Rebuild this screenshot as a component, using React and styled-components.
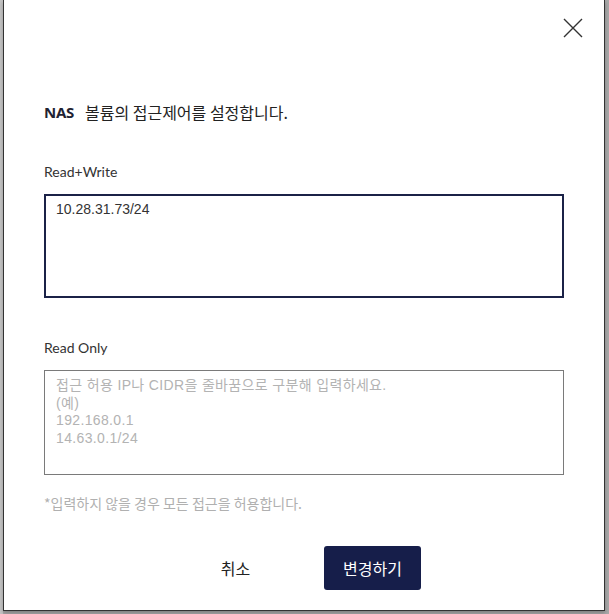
import React from 'react';
import styled, { createGlobalStyle } from 'styled-components';

const GlobalStyle = createGlobalStyle`
  html, body {
    margin: 0;
    padding: 0;
    background: #b3b3b3;
  }
  body {
    font-family: 'Noto Sans CJK KR', 'Noto Sans', sans-serif;
  }
`;

const Backdrop = styled.div`
  display: flex;
  width: 609px;
  height: 614px;
  padding-left: 3px;
  box-sizing: border-box;
  background: linear-gradient(to right, #c4c4c4 0, #c4c4c4 3px, #a8a8a8 3px);
`;

const Modal = styled.div`
  width: 602px;
  height: 611px;
  box-sizing: border-box;
  background: #fff;
  border: 1px solid #333;
  border-top: none;
  box-shadow: 0 2px 4px rgba(0, 0, 0, 0.25);
  display: flex;
  flex-direction: column;
`;

const Header = styled.div`
  display: flex;
  justify-content: flex-end;
  padding: 18px 21px 0 0;
`;

const CloseButton = styled.button`
  width: 20px;
  height: 20px;
  padding: 0;
  border: none;
  background: none;
  cursor: pointer;
  display: flex;
`;

const Body = styled.div`
  padding: 0 40px;
  display: flex;
  flex-direction: column;
`;

const Title = styled.h2`
  margin: 64px 0 0;
  height: 20px;
  display: flex;
  align-items: center;
  font-size: 16px;
  line-height: 20px;
  font-weight: 400;
  color: #222;
  font-family: 'Noto Sans CJK KR', sans-serif;
`;

const Tag = styled.strong`
  font-family: 'Noto Sans', sans-serif;
  font-size: 15px;
  line-height: 20px;
  font-weight: 700;
  color: #1f2333;
  margin-right: 11px;
  letter-spacing: -0.3px;
`;

const Label = styled.label`
  margin-top: ${p => p.$gap}px;
  font-family: Lato, sans-serif;
  font-size: 14px;
  line-height: 20px;
  color: #333;
`;

const Field = styled.textarea`
  margin-top: 12px;
  width: 520px;
  height: ${p => p.$h}px;
  box-sizing: border-box;
  resize: none;
  outline: none;
  border: ${p => (p.$active ? '2px solid #1b2247' : '1px solid #7a7a7a')};
  padding: ${p => (p.$active ? '5px 10px' : '6px 11px')};
  font-family: 'Liberation Sans', 'Noto Sans CJK KR', sans-serif;
  font-size: 14px;
  line-height: 17.5px;
  color: #333;
  caret-color: #111;

  &::placeholder {
    color: #b3b3b3;
    letter-spacing: 0.35px;
    font-family: 'Liberation Sans', 'Noto Sans CJK KR', sans-serif;
  }
`;

const Hint = styled.p`
  margin: 19px 0 0;
  font-size: 14px;
  line-height: 18px;
  color: #b0b0b0;
`;

const Actions = styled.div`
  display: flex;
  justify-content: center;
  gap: 40px;
  margin-top: 34px;
`;

const Button = styled.button`
  width: 97px;
  height: 44px;
  border: none;
  border-radius: 3px;
  font-family: 'Noto Sans CJK KR', sans-serif;
  font-size: 16px;
  cursor: pointer;
  background: ${p => (p.$primary ? '#161e4a' : 'transparent')};
  color: ${p => (p.$primary ? '#fff' : '#222')};
`;

const placeholder =
  '접근 허용 IP나 CIDR을 줄바꿈으로 구분해 입력하세요.\n(예)\n192.168.0.1\n14.63.0.1/24';

export default function App() {
  return (
    <>
      <GlobalStyle />
      <Backdrop>
        <Modal>
          <Header>
            <CloseButton aria-label="닫기">
              <svg width="20" height="20" viewBox="0 0 20 20">
                <path d="M1 1L19 19M19 1L1 19" stroke="#333" strokeWidth="1.4" fill="none" />
              </svg>
            </CloseButton>
          </Header>
          <Body>
            <Title>
              <Tag>NAS</Tag>
              <span>볼륨의 접근제어를 설정합니다.</span>
            </Title>
            <Label $gap={40}>Read+Write</Label>
            <Field $active $h={104} defaultValue="10.28.31.73/24" autoFocus />
            <Label $gap={40}>Read Only</Label>
            <Field $h={105} placeholder={placeholder} />
            <Hint>*입력하지 않을 경우 모든 접근을 허용합니다.</Hint>
            <Actions>
              <Button>취소</Button>
              <Button $primary>변경하기</Button>
            </Actions>
          </Body>
        </Modal>
      </Backdrop>
    </>
  );
}
